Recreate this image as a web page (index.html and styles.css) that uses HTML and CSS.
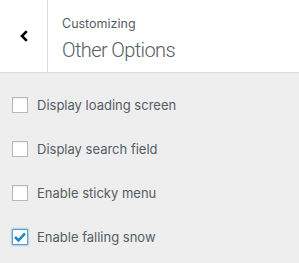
FILE: index.html
```html
<!DOCTYPE html>
<html>
<head>
<meta charset="utf-8">
<link rel="stylesheet" href="styles.css">
</head>
<body>
<div class="panel">
  <header class="head">
    <button class="back" aria-label="Back">
      <svg width="10" height="12" viewBox="0 0 10 12"><path d="M7.8 1.2 L3 6 L7.8 10.8" fill="none" stroke="#000" stroke-width="2.6"/></svg>
    </button>
    <div class="titles">
      <span class="crumb">Customizing</span>
      <h3 class="title">Other Options</h3>
    </div>
  </header>
  <ul class="options">
    <li class="opt"><span class="box"></span><span class="lbl">Display loading screen</span></li>
    <li class="opt"><span class="box"></span><span class="lbl">Display search field</span></li>
    <li class="opt"><span class="box"></span><span class="lbl">Enable sticky menu</span></li>
    <li class="opt"><span class="box checked"><svg width="14" height="12" viewBox="0 0 14 12"><path d="M2 6 L5.5 9.5 L12 2.5" fill="none" stroke="#1e8cbe" stroke-width="2.6"/></svg></span><span class="lbl">Enable falling snow</span></li>
  </ul>
</div>
</body>
</html>
```
FILE: styles.css
```css
html, body { margin: 0; padding: 0; }
body {
  background: #eeeeee;
  font-family: Inter, "Liberation Sans", sans-serif;
  width: 299px;
  height: 263px;
  overflow: hidden;
}
.head {
  display: flex;
  height: 72px;
  background: #fff;
  border-bottom: 1px solid #dddddd;
}
.back {
  width: 48px;
  border: 0;
  border-right: 1px solid #dddddd;
  background: #fff;
  padding: 0;
  display: flex;
  align-items: center;
  justify-content: center;
}
.titles {
  display: flex;
  flex-direction: column;
  padding: 16px 0 0 14px;
}
.crumb {
  font-size: 12.5px;
  color: #555d66;
  line-height: 16px;
}
.title {
  margin: 6px 0 0 0;
  font-family: Roboto, Inter, sans-serif;
  font-size: 20px;
  font-weight: 300;
  color: #555d66;
  line-height: 24px;
  letter-spacing: -0.6px;
}
.options {
  list-style: none;
  margin: 0;
  padding: 24px 0 0 12px;
  display: flex;
  flex-direction: column;
  gap: 28px;
}
.opt {
  display: flex;
  align-items: center;
  height: 16px;
}
.box {
  width: 14px;
  height: 14px;
  border: 1px solid #b4b9be;
  background: #fff;
  box-shadow: inset 0 1px 2px rgba(0,0,0,0.07);
  display: flex;
  align-items: center;
  justify-content: center;
}
.box.checked {
  border-color: #5b9dd9;
  box-shadow: 0 0 2px rgba(30,140,190,0.8);
}
.lbl {
  margin-left: 9px;
  font-size: 13px;
  color: #555d66;
}
```
